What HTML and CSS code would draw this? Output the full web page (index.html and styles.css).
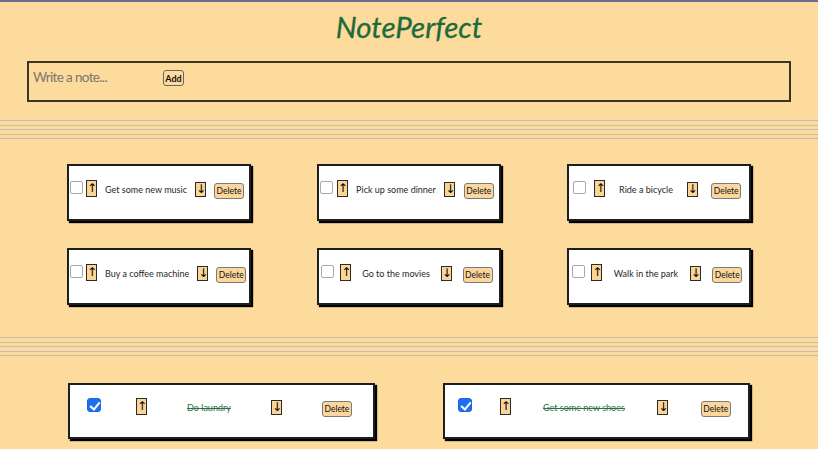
FILE: index.html
```html
<!DOCTYPE html>
<html lang="en">
<head>
<meta charset="utf-8">
<title>NotePerfect</title>
<link rel="stylesheet" href="styles.css">
</head>
<body>
  <h1 class="title">NotePerfect</h1>
  <form class="new-note">
    <input class="note-input" type="text" placeholder="Write a note...">
    <button class="add-btn" type="button">Add</button>
  </form>
  <div class="rule"><span></span><span></span><span></span><span></span><span></span></div>

  <section class="todo-grid">
    <div class="card">
      <input class="check" type="checkbox">
      <button class="arrow up" type="button">↑</button>
      <span class="note-text">Get some new music</span>
      <button class="arrow down" type="button">↓</button>
      <button class="del-btn" type="button">Delete</button>
    </div>
    <div class="card">
      <input class="check" type="checkbox">
      <button class="arrow up" type="button">↑</button>
      <span class="note-text">Pick up some dinner</span>
      <button class="arrow down" type="button">↓</button>
      <button class="del-btn" type="button">Delete</button>
    </div>
    <div class="card">
      <input class="check" type="checkbox">
      <button class="arrow up" type="button">↑</button>
      <span class="note-text">Ride a bicycle</span>
      <button class="arrow down" type="button">↓</button>
      <button class="del-btn" type="button">Delete</button>
    </div>
    <div class="card">
      <input class="check" type="checkbox">
      <button class="arrow up" type="button">↑</button>
      <span class="note-text">Buy a coffee machine</span>
      <button class="arrow down" type="button">↓</button>
      <button class="del-btn" type="button">Delete</button>
    </div>
    <div class="card">
      <input class="check" type="checkbox">
      <button class="arrow up" type="button">↑</button>
      <span class="note-text">Go to the movies</span>
      <button class="arrow down" type="button">↓</button>
      <button class="del-btn" type="button">Delete</button>
    </div>
    <div class="card">
      <input class="check" type="checkbox">
      <button class="arrow up" type="button">↑</button>
      <span class="note-text">Walk in the park</span>
      <button class="arrow down" type="button">↓</button>
      <button class="del-btn" type="button">Delete</button>
    </div>
  </section>

  <div class="rule rule-2"><span></span><span></span><span></span><span></span><span></span></div>

  <section class="done-grid">
    <div class="card done">
      <input class="check" type="checkbox" checked>
      <button class="arrow up" type="button">↑</button>
      <span class="note-text">Do laundry</span>
      <button class="arrow down" type="button">↓</button>
      <button class="del-btn" type="button">Delete</button>
    </div>
    <div class="card done">
      <input class="check" type="checkbox" checked>
      <button class="arrow up" type="button">↑</button>
      <span class="note-text">Get some new shoes</span>
      <button class="arrow down" type="button">↓</button>
      <button class="del-btn" type="button">Delete</button>
    </div>
  </section>
</body>
</html>
```

FILE: styles.css
```css
* { box-sizing: border-box; }

html, body {
  margin: 0;
  padding: 0;
}

body {
  background: #fddb9d;
  border-top: 2px solid #6e6a8a;
  font-family: Lato, "Open Sans", "Liberation Sans", sans-serif;
  color: #1f1f1f;
  min-height: 449px;
}

.title {
  margin: 8px 0 0;
  height: 34px;
  line-height: 34px;
  font-size: 29.5px;
  font-style: italic;
  font-weight: 400;
  color: #1d6a3b;
  text-align: center;
  -webkit-text-stroke: 0.3px #1d6a3b;
}

.new-note {
  margin: 17px 27px 0;
  height: 41px;
  border: 2px solid #3b3427;
  display: flex;
  align-items: flex-start;
  padding: 6px 4px;
}

.note-input {
  width: 130px;
  border: none;
  outline: none;
  background: transparent;
  font-family: Lato, "Open Sans", sans-serif;
  font-size: 13.5px;
  letter-spacing: -0.65px;
  padding: 0;
  height: 17px;
  line-height: 17px;
  color: #333;
}

.note-input::placeholder {
  color: #7b766c;
}

.add-btn {
  margin-top: 1px;
  width: 21px;
  height: 16px;
  padding: 0;
  font-family: Lato, "Open Sans", sans-serif;
  font-size: 9px;
  font-weight: 700;
  color: #111;
  background: #fddb9d;
  border: 1.5px solid #666;
  border-radius: 3px;
}

.rule {
  margin-top: 18px;
  display: flex;
  flex-direction: column;
  gap: 3.5px;
}

.rule span {
  display: block;
  height: 1px;
  background: #c3bcb1;
}

.todo-grid {
  margin-top: 25px;
  display: grid;
  grid-template-columns: repeat(3, 184px);
  column-gap: 66px;
  row-gap: 27px;
  justify-content: center;
}

.card {
  background: #fff;
  border: 2px solid #1e1e1e;
  box-shadow: 2px 2px 1px #000;
  height: 57px;
  display: flex;
  align-items: flex-start;
  justify-content: space-around;
  padding: 14px 0 0;
}

.check {
  -webkit-appearance: none;
  appearance: none;
  position: relative;
  margin: 1px 3px 0 1px;
  width: 13px;
  height: 13px;
  flex: none;
  background: #fff;
  border: 1px solid #a9a9a9;
  border-radius: 2px;
}

.check:checked {
  width: 14px;
  height: 14px;
  margin-top: 0;
  background: #1f6ff2;
  border: 1px solid #1a64de;
  border-radius: 3px;
}

.check:checked::after {
  content: "";
  position: absolute;
  left: 3.5px;
  top: 0.5px;
  width: 4px;
  height: 8px;
  border-right: 2.2px solid #fff;
  border-bottom: 2.2px solid #fff;
  transform: rotate(40deg);
}

.arrow {
  flex: none;
  width: 11px;
  height: 17px;
  padding: 0;
  border: 1.5px solid #2a2a2a;
  background: #fbd596;
  color: #000;
  font-family: "DejaVu Sans", sans-serif;
  font-size: 12px;
  line-height: 13px;
  border-radius: 0;
}

.arrow.down {
  margin-top: 2px;
  height: 15px;
}

.note-text {
  margin: 3px 8px 0;
  font-size: 9px;
  line-height: 13px;
  white-space: nowrap;
  color: #1f1f1f;
}

.del-btn {
  flex: none;
  margin: 3px 5px 0 8px;
  width: 30px;
  height: 16px;
  padding: 0;
  font-family: Lato, "Open Sans", sans-serif;
  font-size: 8.5px;
  color: #111;
  background: #fcd79d;
  border: 1.5px solid #7a7a7a;
  border-radius: 3px;
}

.rule-2 {
  margin-top: 32px;
}

.done-grid {
  margin-top: 27px;
  display: grid;
  grid-template-columns: repeat(2, 307px);
  column-gap: 68px;
  justify-content: center;
}

.card.done {
  height: 56px;
  padding-top: 13px;
}

.card.done .note-text {
  color: #2c6e47;
  text-decoration: line-through;
}
```
